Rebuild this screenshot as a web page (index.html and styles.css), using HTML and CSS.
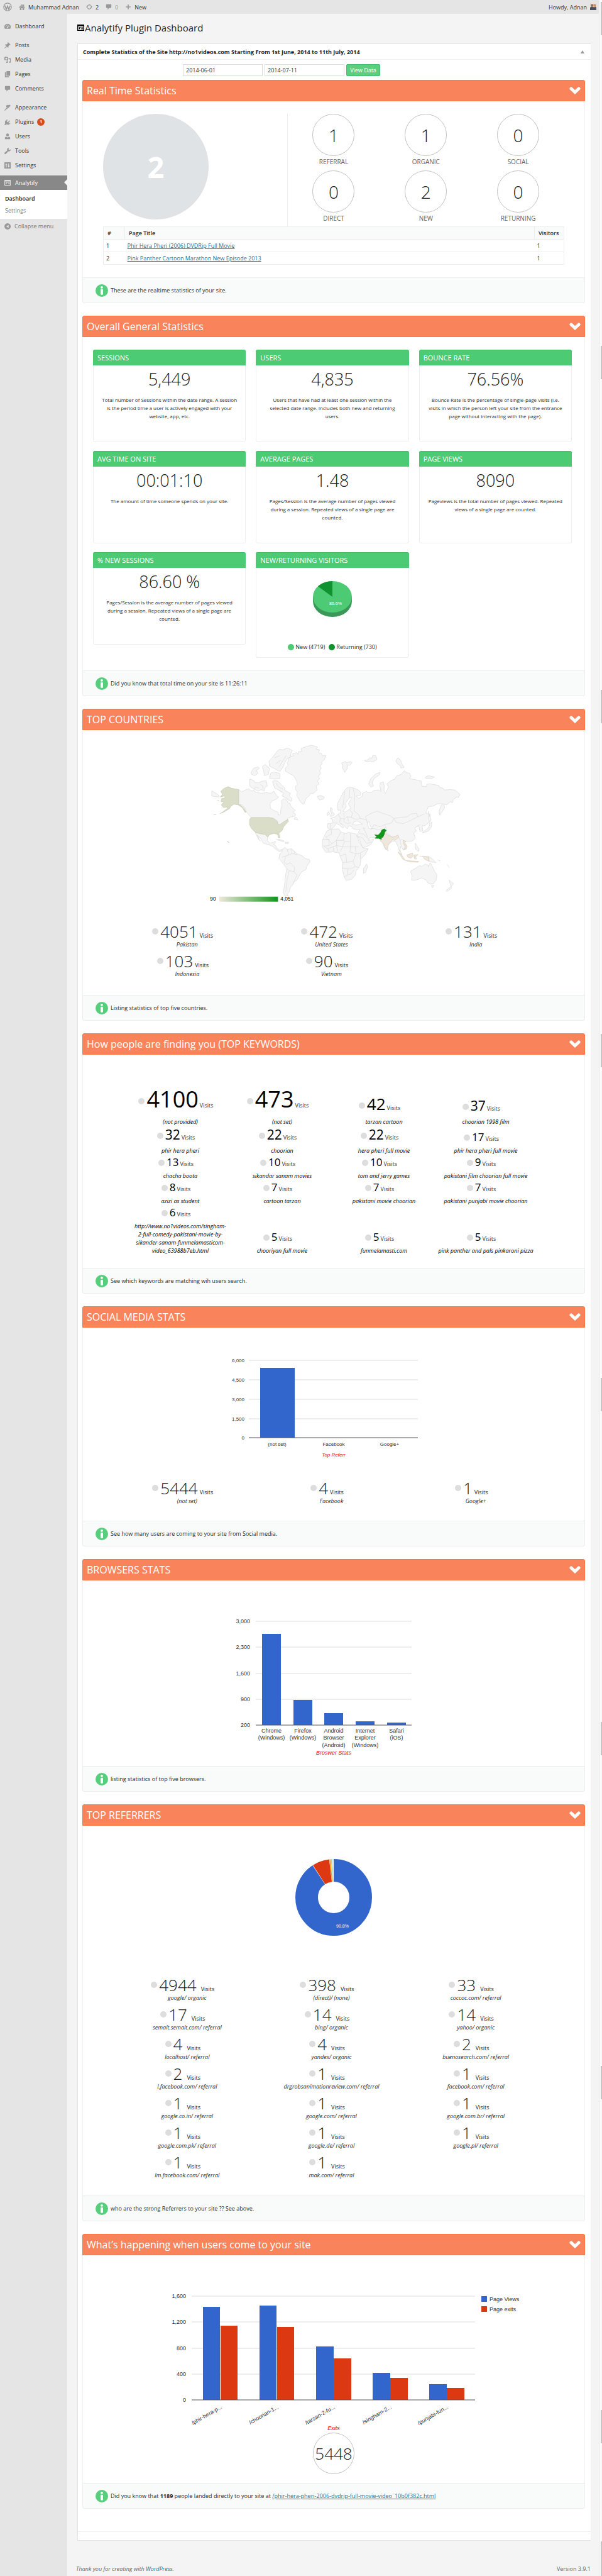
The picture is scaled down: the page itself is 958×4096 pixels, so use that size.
FILE: index.html
```html
<!DOCTYPE html>
<html lang="en">
<head>
<meta charset="utf-8">
<title>Analytify Plugin Dashboard</title>
<link rel="stylesheet" href="styles.css">
</head>
<body>
<svg class="sprite" aria-hidden="true">
  <symbol id="chevron" viewBox="0 0 18 12"><path d="M3 3 9 8.500 15 3" fill="none" stroke="#fff" stroke-width="5" stroke-linecap="round"/></symbol>
  <symbol id="info" viewBox="0 0 20 20"><circle cx="10" cy="10" r="10" fill="#57ce7c"/><circle cx="10" cy="4.800" r="1.900" fill="#fff"/><rect x="8.200" y="7.700" width="3.800" height="9" rx="1.300" fill="#fff"/></symbol>
  <symbol id="report" viewBox="0 0 12 12"><path fill-rule="evenodd" d="M0 0h12v11H0zM1.500 3v6.500h9V3zM3 4.500h3V6H4.500v2H3zM7 4.500h1v4H7zM9 4.500h1v4H9z"/></symbol>
</svg>
<div class="window">
  <header class="adminbar">
    <a href="#" class="bar-item" aria-label="About WordPress"><svg class="ico logo" viewBox="0 0 14 14"><circle cx="7" cy="7" r="6.200" fill="none" stroke="#999" stroke-width="1.200"/><path d="M2.500 4.500 5 11 7 5.800 9 11 11.200 5" fill="none" stroke="#999" stroke-width="1.700"/></svg></a>
    <a href="#" class="bar-item"><svg class="ico" viewBox="0 0 12 12"><path d="M0 7 6 1l2 2V1.500h2V5l2 2-1 .7L6 3 1 7.700zM2 7.500 6 4l4 3.500V12H7V8.500H5V12H2z"/></svg>Muhammad Adnan</a>
    <a href="#" class="bar-item"><svg class="ico" viewBox="0 0 12 12"><path d="M2 6a4 4 0 0 1 7-2.500M10 6a4 4 0 0 1-7 2.500" fill="none" stroke="#999" stroke-width="1.500"/><path d="M0 5.500h4L2 8.500zM8 6.500h4L10 3.500z"/></svg>2</a>
    <a href="#" class="bar-item muted"><svg class="ico" viewBox="0 0 12 12"><path d="M2 1h8a1 1 0 0 1 1 1v5a1 1 0 0 1-1 1H7l-3 3.500V8H2a1 1 0 0 1-1-1V2a1 1 0 0 1 1-1z"/></svg>0</a>
    <a href="#" class="bar-item"><svg class="ico" viewBox="0 0 12 12"><path d="M5 1.500h2V5h3.500v2H7v3.500H5V7H1.500V5H5z"/></svg>New</a>
    <a href="#" class="bar-item account">Howdy, Adnan<svg class="ico" viewBox="0 0 11 11"><rect width="11" height="11" fill="#d9cfc6"/><path d="M0 11V6.500L3 5l4 1 3-1 1 2v4z" fill="#4a4f5e"/><rect x="2" y="1" width="3" height="4" fill="#8a5a3c"/><rect x="6" y="1" width="4" height="4" fill="#d98a52"/></svg></a>
  </header>
  <div class="shell">
    <nav class="sidebar" aria-label="Admin menu">
      <ul class="menu">
        <li><a href="#"><svg class="ico" viewBox="0 0 12 12"><path fill-rule="evenodd" d="M6 1a6 6 0 0 0-5 9.500h10A6 6 0 0 0 6 1zM5.500 2.500h1v1.500h-1zM2 6h1.500v1H2zm6.500 0H10v1H8.500zM3 3.500l1-.5.700 1-1 .7zM9 3 7 8a1.200 1.200 0 1 1-2-.5z"/></svg>Dashboard</a></li>
        <li class="gap"><a href="#"><svg class="ico" viewBox="0 0 12 12"><path d="M7 0l5 5-1 .8-1.500-.3L7.500 8l.3 2-1 .8L4.500 8.500.5 12 0 11.500 3.500 7.500 1.200 5.200 2 4.200l2 .3L6.500 2.500 6.200 1z"/></svg>Posts</a></li>
        <li><a href="#"><svg class="ico" viewBox="0 0 12 12"><path fill-rule="evenodd" d="M0 1h1.500l.5-1h2l.5 1H7v5.500H0zM3.500 2a1.800 1.800 0 1 0 .1 0zM8 3h4v7.500a1.500 1.500 0 1 1-1.200-1.500V5H8zM4 7.500h2.500V11A1.500 1.500 0 1 1 5.300 9.500z"/></svg>Media</a></li>
        <li><a href="#"><svg class="ico" viewBox="0 0 12 12"><path d="M4 0h7v9H4zM1 2h2v8h6v2H1z"/></svg>Pages</a></li>
        <li><a href="#"><svg class="ico" viewBox="0 0 12 12"><path d="M2 1h8a1 1 0 0 1 1 1v5a1 1 0 0 1-1 1H7l-3 3.500V8H2a1 1 0 0 1-1-1V2a1 1 0 0 1 1-1z"/></svg>Comments</a></li>
        <li class="gap"><a href="#"><svg class="ico" viewBox="0 0 12 12"><path d="M5 1l2 .5L9.500.5 12 2 9 5.500 7 7.500 4.500 5.500 3 3.500zM4 6l2.500 2L4 9l-3 3-1-1 2.500-2.500z"/></svg>Appearance</a></li>
        <li><a href="#"><svg class="ico" viewBox="0 0 12 12"><path d="M2 3l1 1 2-3 1 .7L4.500 5 6 6.500 10 3l1 1-3.500 4L9 9l2-1 .5 1L8 11l-4-.5L1 12 0 11l1.500-2.500L1 5z"/></svg>Plugins<span class="badge">1</span></a></li>
        <li><a href="#"><svg class="ico" viewBox="0 0 12 12"><circle cx="6" cy="3" r="2.700"/><path d="M1 11V8l2-1.800 3 1.800 3-1.800L11 8v3z"/></svg>Users</a></li>
        <li><a href="#"><svg class="ico" viewBox="0 0 12 12"><path d="M9 0 7.500 2.500l2 2L12 3c.3 3-2 4.500-4.500 3.700L3 11.500a1.500 1.500 0 0 1-2.500-2.200L5.300 5C4.500 2 6 0 9 0z"/></svg>Tools</a></li>
        <li><a href="#"><svg class="ico" viewBox="0 0 12 12"><path fill-rule="evenodd" d="M0 0h12v12H0zM3 2v2H2v1.500h1V10h1.200V5.500h1V4h-1V2zM7.500 2v4.500h-1V8h1v2h1.200V8h1.300V6.500H8.700V2z"/></svg>Settings</a></li>
        <li class="gap-s current"><a href="#" aria-current="page"><svg class="ico"><use href="#report"/></svg>Analytify</a>
          <ul class="submenu">
            <li><a href="#" class="active">Dashboard</a></li>
            <li><a href="#">Settings</a></li>
          </ul>
        </li>
      </ul>
      <button type="button" class="collapse"><svg class="ico" viewBox="0 0 12 12"><path fill-rule="evenodd" d="M6 0a6 6 0 1 0 .1 0zM8 3v6L3.500 6z"/></svg>Collapse menu</button>
    </nav>
    <div class="content">
      <h1 class="page-title"><svg class="title-ico"><use href="#report"/></svg>Analytify Plugin Dashboard</h1>
      <main class="postbox">
        <div class="postbox-head">
          <h2>Complete Statistics of the Site http://no1videos.com Starting From 1st June, 2014 to 11th July, 2014</h2>
          <button type="button" class="toggle" aria-label="Toggle panel"><svg viewBox="0 0 6 5" width="6" height="5"><path d="M0 5 3 0l3 5z" fill="#999"/></svg></button>
        </div>
        <div class="postbox-body">
          <form class="dates">
            <input type="text" value="2014-06-01" aria-label="Start date">
            <input type="text" value="2014-07-11" aria-label="End date">
            <button type="button">View Data</button>
          </form>

          <section class="panel">
            <div class="panel-head"><h3>Real Time Statistics</h3><button type="button" aria-label="Collapse"><svg><use href="#chevron"/></svg></button></div>
            <div class="panel-body realtime">
              <div class="rt-top">
                <div class="rt-total"><span class="big-circle">2</span></div>
                <div class="rt-grid">
                  <div><span class="ring">1</span>REFERRAL</div>
                  <div><span class="ring">1</span>ORGANIC</div>
                  <div><span class="ring">0</span>SOCIAL</div>
                  <div><span class="ring">0</span>DIRECT</div>
                  <div><span class="ring">2</span>NEW</div>
                  <div><span class="ring">0</span>RETURNING</div>
                </div>
              </div>
              <table class="pages">
                <thead><tr><th class="num">#</th><th>Page Title</th><th class="vis">Visitors</th></tr></thead>
                <tbody>
                  <tr><td>1</td><td><a href="#">Phir Hera Pheri (2006) DVDRip Full Movie</a></td><td>1</td></tr>
                  <tr><td>2</td><td><a href="#">Pink Panther Cartoon Marathon New Episode 2013</a></td><td>1</td></tr>
                </tbody>
              </table>
            </div>
            <div class="panel-foot"><svg><use href="#info"/></svg><p>These are the realtime statistics of your site.</p></div>
          </section>

          <section class="panel">
            <div class="panel-head"><h3>Overall General Statistics</h3><button type="button" aria-label="Collapse"><svg><use href="#chevron"/></svg></button></div>
            <div class="panel-body cards">
              <article class="card"><h4>SESSIONS</h4><strong>5,449</strong><p>Total number of Sessions within the date range. A session is the period time a user is actively engaged with your website, app, etc.</p></article>
              <article class="card"><h4>USERS</h4><strong>4,835</strong><p>Users that have had at least one session within the selected date range. Includes both new and returning users.</p></article>
              <article class="card"><h4>BOUNCE RATE</h4><strong>76.56%</strong><p>Bounce Rate is the percentage of single-page visits (i.e. visits in which the person left your site from the entrance page without interacting with the page).</p></article>
              <article class="card"><h4>AVG TIME ON SITE</h4><strong>00:01:10</strong><p>The amount of time someone spends on your site.</p></article>
              <article class="card"><h4>AVERAGE PAGES</h4><strong>1.48</strong><p>Pages/Session is the average number of pages viewed during a session. Repeated views of a single page are counted.</p></article>
              <article class="card"><h4>PAGE VIEWS</h4><strong>8090</strong><p>Pageviews is the total number of pages viewed. Repeated views of a single page are counted.</p></article>
              <article class="card"><h4>% NEW SESSIONS</h4><strong>86.60 %</strong><p>Pages/Session is the average number of pages viewed during a session. Repeated views of a single page are counted.</p></article>
              <article class="card"><h4>NEW/RETURNING VISITORS</h4>
                <svg class="pie" viewBox="0 0 64 58" role="img" aria-label="New 86.6%">
                  <path d="M1 25v7a31 25 0 0 0 62 0v-7z" fill="#3b9858"/>
                  <ellipse cx="32" cy="25" rx="31" ry="25" fill="#4dca74"/>
                  <path d="M32 25V0A31 25 0 0 0 9 8.300z" fill="#109231"/>
                  <text x="37" y="38" class="tiny">86.6%</text>
                </svg>
                <ul class="legend"><li><i class="new"></i>New (4719)</li><li><i class="ret"></i>Returning (730)</li></ul>
              </article>
            </div>
            <div class="panel-foot"><svg><use href="#info"/></svg><p>Did you know that total time on your site is 11:26:11</p></div>
          </section>

          <section class="panel">
            <div class="panel-head"><h3>TOP COUNTRIES</h3><button type="button" aria-label="Collapse"><svg><use href="#chevron"/></svg></button></div>
            <div class="panel-body countries">
              <svg class="map" viewBox="-15 0 1245 789" role="img" aria-label="Visits by country">
                <defs><linearGradient id="scale"><stop offset="0" stop-color="#efe6dc"/><stop offset="1" stop-color="#109618"/></linearGradient></defs>
                <g class="land">
                  <path d="M153 232 168 243 180 236 200 228 212 238 226 236 235 244 262 250 285 246 305 250 322 240 328 252 335 262 345 268 330 280 315 284 303 300 305 322 322 332 342 340 345 355 352 350 355 325 360 308 358 285 372 275 385 285 392 300 398 296 402 310 410 318 424 332 412 340 425 350 422 360 405 362 385 372 390 376 375 382 360 395 345 402 338 395 342 385 330 375 318 368 300 366 212 366 200 350 190 340 185 322 170 305 153 303ZM424 364l8 4 4 10-18-4z"/>
                  <path d="M232 438 262 444 280 446 292 460 290 475 300 488 318 485 328 478 330 485 320 495 330 500 335 512 348 522 362 518 358 526 345 527 330 518 318 505 295 495 270 488 258 465 245 455 242 450 255 478 248 470ZM333 472l17-2 20 8-2 4-18-6zM375 484l17 0-2 6-14 0z"/>
                  <path d="M362 518 375 508 385 518 405 515 418 525 430 538 460 550 470 562 490 566 495 575 478 600 475 615 455 625 445 640 432 665 420 672 412 685 400 700 395 720 385 732 390 740 375 742 366 725 372 690 376 650 383 610 365 585 345 560 350 540 360 530Z"/>
                  <path d="M395 75 418 70 410 62 430 55 436 64 440 50 455 50 452 35 468 30 480 25 500 20 530 28 522 38 540 42 535 55 550 60 552 70 570 70 562 90 550 100 552 110 542 118 548 130 540 142 545 155 534 168 540 180 530 192 538 204 524 214 528 235 510 250 495 252 490 262 475 275 465 302 455 298 446 288 440 275 430 260 434 245 425 230 425 215 434 208 430 190 415 165 395 155 378 145 375 130 390 115 384 102 390 95Z"/>
                  <path d="M315 192 330 188 345 195 358 210 375 225 372 234 400 250 395 262 408 275 405 288 390 282 385 275 360 262 368 250 355 240 340 232 325 225 318 205ZM205 182l20 6 5 10 20 2 12-8 23-2 5 25-10 6-5 19-14-8-16 8-20-13-5 0-15-13z"/>
                  <path d="M325 65 340 45 350 40 365 42 385 33 410 45 402 60 402 75 385 84 375 100 365 125 350 145 335 138 320 130 300 120 298 95 312 82ZM320 148l30 7 0 25-25 2-25-4 5-23zM212 150l12-20 22-6 6 6-14 10 7 15-15 10-16-6zM266 122l14-10 20 18-5 30-20 5-2-20zM325 80 350 70M330 110 355 90M345 125 380 70"/>
                  <path d="M528 265 545 260 563 268 558 278 540 282ZM592 318l10 7-4 10 14 15-7 8-15 2 8-15-8-10zM575 345l10-7 3 12-12 6zM645 105l20-7 3 6 22-6 6 5-11 12-13 0 2 15-14 20-4-14-8-6 2-15zM755 92l15-2 10-10 10 2 5-14 14 2 6 18-10 6-10 6-12-4-23 2zM905 95l10-15 8 6 7 9 4 14 11 16-15 5-4-12-14-10zM785 220 775 205 785 180 808 158 830 150 825 162 800 180 792 200 798 215ZM1045 175l15-10 30 7-15 8-25-2z"/>
                  <path d="M628 330 625 300 640 270 660 235 672 224 685 220 705 225 722 232 738 245 735 260 715 262 728 275 745 262 745 250 765 240 770 246 790 245 800 236 822 234 835 240 828 215 830 200 845 195 850 215 848 235 855 250 870 220 862 205 880 190 900 182 910 165 930 160 945 142 955 150 972 155 976 170 970 180 1000 185 1025 190 1030 215 1050 218 1054 206 1070 205 1110 212 1115 222 1130 225 1136 234 1165 232 1190 235 1212 255 1205 270 1195 268 1180 280 1175 295 1165 290 1150 305 1135 302 1138 320 1115 355 1112 335 1120 310 1130 300 1105 300 1085 310 1060 315 1048 345 1070 350 1068 385 1045 405 1030 405 1035 430 1020 432 1015 405 995 415 1003 430 990 440 998 465 985 478 960 480 945 482 958 500 955 515 940 522 930 500 925 520 935 545 925 535 915 505 905 480 890 478 870 495 862 520 850 510 840 480 825 470 805 462 780 462 775 475 800 470 785 495 765 505 745 510 735 480 720 450 728 432 735 424 720 425 700 420 692 408 680 405 672 420 655 402 640 393 656 412 650 416 636 402 620 395 605 415 590 425 578 415 578 395 605 392 600 375 592 370 615 362 628 350 640 345 640 330Z"/>
                  <path d="M575 430 595 422 632 420 642 435 665 442 680 437 715 445 728 480 748 512 772 515 760 540 738 565 735 590 728 605 715 620 712 640 695 660 668 667 658 650 648 610 650 580 638 550 635 535 605 530 570 532 552 505 555 470 565 450ZM765 588l5 12-10 28-10 4 0-22z"/>
                  <path d="M975 622 1000 608 1020 595 1030 600 1045 588 1060 595 1060 602 1070 582 1080 600 1090 622 1102 640 1098 665 1085 682 1072 684 1060 680 1050 665 1030 655 1000 665 980 665 983 645ZM1075 690l13 2-8 10zM1160 665l22 17-12 13-5-10zM1145 715l25-20 2 7-22 18z"/>
                  <path d="M1060 430 1040 438 1032 438 1055 420 1066 405 1064 395 1078 388 1075 410 1062 430ZM1062 335l4 25 8 15-8 14-4-24zM998 488l8 10 2 8 8 8-2 14-12-8-4-10zM1063 552l22 16 12 14-32-6zM862 520l6-2 0 8zM24 238l30 18 6 12-36-5zM1105 568l14 6M1150 590l10 14"/>
                </g>
                <g class="sea">
                  <path d="M682 272 692 268 690 280 678 300 690 322 662 340 652 335 668 315 665 295ZM705 386l18-4 22 16-30 4-18-4zM768 390l10-5 4 20 8 15-14-2z"/>
                </g>
                <g class="borders">
                  <path d="M385 518 392 545 378 550 362 555M405 515 408 538 392 545M418 525 420 540 408 538M430 538 428 545 420 540M378 550 370 580 383 590 400 582 420 605 418 625 432 640 425 655 412 685M383 610 395 620 418 625M395 620 385 660 378 720"/>
                  <path d="M595 422 598 445 568 460M555 470 585 470 585 500 558 502M568 460 600 490 620 475 642 435M600 490 585 500M620 475 655 475 658 442M655 475 660 480 688 480 688 440M688 480 688 505 728 505M620 475 622 500 650 505 660 480M622 500 625 528M650 505 640 530M650 505 688 505 685 530 715 540 735 535 772 515M715 540 710 505M638 550 665 540 670 580 700 575 710 550 715 540M650 580 670 580M700 575 710 600 690 612 650 608M710 600 728 605M675 610 675 640 690 635 705 615M658 650 675 640M735 535 735 565M558 502 580 515 605 505 622 500M580 515 585 532M605 505 607 530"/>
                  <path d="M700 225 708 255 705 300M685 225 682 272M660 240 655 290 650 320M685 330 698 345 692 365 712 375 735 370 725 350 705 335 708 300M628 350 640 370 660 372 672 362 692 365M655 345 658 365M660 372 655 385 672 395 690 390M640 370 635 392M672 362 680 385M605 392 625 390M592 395 590 420M735 370 765 378 760 360 790 345 815 335 840 345 880 358 895 370 960 362 975 350 1005 345 1010 362 1040 350M895 370 905 388 940 395 975 380 1010 362M765 378 770 395M790 420 800 400 830 410 850 400 885 392 895 370M850 400 862 420 855 435 890 460 915 452M785 420 800 418 820 425 835 418M748 415 760 435 770 460M728 440 750 445 775 470M720 455 745 462 765 490 790 482M748 415 760 418M915 452 925 475 935 470 945 482M925 475 930 500M1005 408 1020 400"/>
                  <path d="M225 235 232 220 250 225M255 205 268 215 270 232M330 200 345 220 365 230M345 235 362 246"/>
                </g>
                <path class="us" d="M212 366 300 366 318 370 330 378 338 385 342 400 352 398 370 385 388 375 391 385 378 398 368 410 362 425 356 432 345 440 350 462 343 462 338 445 320 442 300 448 292 460 280 446 262 444 232 436 212 415 205 400 205 375ZM153 232 153 303 165 308 180 322 188 340 183 340 170 318 150 305 130 302 115 312 110 322 85 338 65 347 95 325 102 316 80 318 70 305 82 292 68 288 72 275 88 272 85 262 65 268 75 255 68 240 80 228 102 218 120 226ZM98 478l9 8-4-2zM50 282l10 4M32 353l14-1"/>
                <path class="asia" d="M838 465 852 435 865 450 890 460 915 450 920 460 900 475 890 472 870 492 865 515 857 520 848 495 840 485 830 478ZM940 475l12 3-4 12 12 15-5 10-13 5 8-15-10-17zM915 530l15 10 20 30 25 3 40 3-5 4-40-3-30-10zM958 545l27-10 3 15-10 10-16-5zM992 545l20-2-12 10 3 12-10-4zM1018 550l12 2M1032 550l31 3 0 22-18-8z"/>
                <path class="pk" d="M803 448 820 450 832 438 838 425 850 420 860 428 852 434 850 445 843 460 835 462 836 470 822 465 805 465 814 456Z"/>
                <rect x="60" y="744" width="281" height="24" fill="url(#scale)"/>
                <text class="scale-label" x="16" y="764">90</text>
                <text class="scale-label" x="353" y="764">4,051</text>
              </svg>
              <div class="stats">
                <div class="stat"><div class="count"><i></i><b>4051</b><span>Visits</span></div><em>Pakistan</em></div>
                <div class="stat"><div class="count"><i></i><b>472</b><span>Visits</span></div><em>United States</em></div>
                <div class="stat"><div class="count"><i></i><b>131</b><span>Visits</span></div><em>India</em></div>
                <div class="stat"><div class="count"><i></i><b>103</b><span>Visits</span></div><em>Indonesia</em></div>
                <div class="stat"><div class="count"><i></i><b>90</b><span>Visits</span></div><em>Vietnam</em></div>
              </div>
            </div>
            <div class="panel-foot"><svg><use href="#info"/></svg><p>Listing statistics of top five countries.</p></div>
          </section>

          <section class="panel">
            <div class="panel-head"><h3>How people are finding you (TOP KEYWORDS)</h3><button type="button" aria-label="Collapse"><svg><use href="#chevron"/></svg></button></div>
            <div class="panel-body keywords">
              <div class="word"><div class="k-xl"><i></i>4100<span>Visits</span></div><em>(not provided)</em></div>
              <div class="word"><div class="k-xl"><i></i>473<span>Visits</span></div><em>(not set)</em></div>
              <div class="word"><div class="k-l"><i></i>42<span>Visits</span></div><em>tarzan cartoon</em></div>
              <div class="word"><div class="k-m"><i></i>37<span>Visits</span></div><em>choorian 1998 film</em></div>
              <div class="word"><div class="k-m"><i></i>32<span>Visits</span></div><em>phir hera pheri</em></div>
              <div class="word"><div class="k-m"><i></i>22<span>Visits</span></div><em>choorian</em></div>
              <div class="word"><div class="k-m"><i></i>22<span>Visits</span></div><em>hera pheri full movie</em></div>
              <div class="word"><div class="k-s"><i></i>17<span>Visits</span></div><em>phir hera pheri full movie</em></div>
              <div class="word"><div class="k-s"><i></i>13<span>Visits</span></div><em>chacha boota</em></div>
              <div class="word"><div class="k-s"><i></i>10<span>Visits</span></div><em>sikandar sanam movies</em></div>
              <div class="word"><div class="k-s"><i></i>10<span>Visits</span></div><em>tom and jerry games</em></div>
              <div class="word"><div class="k-s"><i></i>9<span>Visits</span></div><em>pakistani film choorian full movie</em></div>
              <div class="word"><div class="k-s"><i></i>8<span>Visits</span></div><em>azizi as student</em></div>
              <div class="word"><div class="k-s"><i></i>7<span>Visits</span></div><em>cartoon tarzan</em></div>
              <div class="word"><div class="k-s"><i></i>7<span>Visits</span></div><em>pakistani movie choorian</em></div>
              <div class="word"><div class="k-s"><i></i>7<span>Visits</span></div><em>pakistani punjabi movie choorian</em></div>
              <div class="word"><div class="k-s"><i></i>6<span>Visits</span></div><em>http://www.no1videos.com/singham-<br>2-full-comedy-pakistani-movie-by-<br>sikander-sanam-funmelamasticom-<br>video_63988b7eb.html</em></div>
              <div class="word"><div class="k-s"><i></i>5<span>Visits</span></div><em>chooriyan full movie</em></div>
              <div class="word"><div class="k-s"><i></i>5<span>Visits</span></div><em>funmelamasti.com</em></div>
              <div class="word"><div class="k-s"><i></i>5<span>Visits</span></div><em>pink panther and pals pinkaroni pizza</em></div>
            </div>
            <div class="panel-foot"><svg><use href="#info"/></svg><p>See which keywords are matching wih users search.</p></div>
          </section>

          <section class="panel">
            <div class="panel-head"><h3>SOCIAL MEDIA STATS</h3><button type="button" aria-label="Collapse"><svg><use href="#chevron"/></svg></button></div>
            <div class="panel-body social">
              <svg class="chart c8" width="340" height="170" viewBox="-20 0 340 170" role="img" aria-label="Top social referrers">
                <path class="grid" d="M15 12h269M15 43h269M15 74h269M15 105h269"/>
                <rect class="blue" x="33" y="24" width="55" height="111"/>
                <path class="axis" d="M15 135h269"/>
                <g class="end"><text x="8" y="15">6,000</text><text x="8" y="46">4,500</text><text x="8" y="77">3,000</text><text x="8" y="108">1,500</text><text x="8" y="138">0</text></g>
                <g class="mid"><text x="60" y="148">(not set)</text><text x="150" y="148">Facebook</text><text x="239" y="148">Google+</text><text class="caption" x="150" y="165">Top Referr</text></g>
              </svg>
              <div class="stats">
                <div class="stat"><div class="count"><i></i><b>5444</b><span>Visits</span></div><em>(not set)</em></div>
                <div class="stat"><div class="count"><i></i><b>4</b><span>Visits</span></div><em>Facebook</em></div>
                <div class="stat"><div class="count"><i></i><b>1</b><span>Visits</span></div><em>Google+</em></div>
              </div>
            </div>
            <div class="panel-foot"><svg><use href="#info"/></svg><p>See how many users are coming to your site from Social media.</p></div>
          </section>

          <section class="panel">
            <div class="panel-head"><h3>BROWSERS STATS</h3><button type="button" aria-label="Collapse"><svg><use href="#chevron"/></svg></button></div>
            <div class="panel-body browsers">
              <svg class="chart c9" width="340" height="230" viewBox="-20 0 340 230" role="img" aria-label="Browser stats">
                <path class="grid" d="M26 15h248M26 56h248M26 98h248M26 139h248"/>
                <path class="blue" d="M36 35h30v145H36zM86 140h30v40H86zM135 161h30v19h-30zM185 174h30v6h-30zM235 176h30v4h-30z"/>
                <path class="axis" d="M26 180h248"/>
                <g class="end"><text x="17" y="18">3,000</text><text x="17" y="59">2,300</text><text x="17" y="101">1,600</text><text x="17" y="142">900</text><text x="17" y="183">200</text></g>
                <g class="mid">
                  <text x="51" y="192">Chrome</text><text x="51" y="203">(Windows)</text>
                  <text x="101" y="192">Firefox</text><text x="101" y="203">(Windows)</text>
                  <text x="150" y="192">Android</text><text x="150" y="203">Browser</text><text x="150" y="215">(Android)</text>
                  <text x="200" y="192">Internet</text><text x="200" y="203">Explorer</text><text x="200" y="215">(Windows)</text>
                  <text x="250" y="192">Safari</text><text x="250" y="203">(iOS)</text>
                  <text class="caption" x="150" y="227">Broswer Stats</text>
                </g>
              </svg>
            </div>
            <div class="panel-foot"><svg><use href="#info"/></svg><p>listing statistics of top five browsers.</p></div>
          </section>

          <section class="panel">
            <div class="panel-head"><h3>TOP REFERRERS</h3><button type="button" aria-label="Collapse"><svg><use href="#chevron"/></svg></button></div>
            <div class="panel-body referrers">
              <svg class="chart donut" width="140" height="140" viewBox="-70 -70 140 140" role="img" aria-label="Referrer share">
                <g fill="none" stroke-width="36" transform="rotate(-90)">
                  <circle r="43" stroke="#3366cc" pathLength="1000" stroke-dasharray="907 1000"/>
                  <circle r="43" stroke="#dc3912" pathLength="1000" stroke-dasharray="72 1000" stroke-dashoffset="-909"/>
                  <circle r="43" stroke="#ff9900" pathLength="1000" stroke-dasharray="5 1000" stroke-dashoffset="-982"/>
                  <circle r="43" stroke="#109618" stroke-opacity=".5" pathLength="1000" stroke-dasharray="2 1000" stroke-dashoffset="-989"/>
                  <circle r="43" stroke="#0099c6" stroke-opacity=".5" pathLength="1000" stroke-dasharray="2 1000" stroke-dashoffset="-993"/>
                </g>
                <text class="share" x="14" y="48">90.8%</text>
              </svg>
              <div class="stats wide">
                <div class="stat"><div class="count"><i></i><b>4944</b><span>Visits</span></div><em>google/ organic</em></div>
                <div class="stat"><div class="count"><i></i><b>398</b><span>Visits</span></div><em>(direct)/ (none)</em></div>
                <div class="stat"><div class="count"><i></i><b>33</b><span>Visits</span></div><em>coccoc.com/ referral</em></div>
                <div class="stat"><div class="count"><i></i><b>17</b><span>Visits</span></div><em>semalt.semalt.com/ referral</em></div>
                <div class="stat"><div class="count"><i></i><b>14</b><span>Visits</span></div><em>bing/ organic</em></div>
                <div class="stat"><div class="count"><i></i><b>14</b><span>Visits</span></div><em>yahoo/ organic</em></div>
                <div class="stat"><div class="count"><i></i><b>4</b><span>Visits</span></div><em>localhost/ referral</em></div>
                <div class="stat"><div class="count"><i></i><b>4</b><span>Visits</span></div><em>yandex/ organic</em></div>
                <div class="stat"><div class="count"><i></i><b>2</b><span>Visits</span></div><em>buenosearch.com/ referral</em></div>
                <div class="stat"><div class="count"><i></i><b>2</b><span>Visits</span></div><em>l.facebook.com/ referral</em></div>
                <div class="stat"><div class="count"><i></i><b>1</b><span>Visits</span></div><em>drgrobsanimationreview.com/ referral</em></div>
                <div class="stat"><div class="count"><i></i><b>1</b><span>Visits</span></div><em>facebook.com/ referral</em></div>
                <div class="stat"><div class="count"><i></i><b>1</b><span>Visits</span></div><em>google.co.in/ referral</em></div>
                <div class="stat"><div class="count"><i></i><b>1</b><span>Visits</span></div><em>google.com/ referral</em></div>
                <div class="stat"><div class="count"><i></i><b>1</b><span>Visits</span></div><em>google.com.br/ referral</em></div>
                <div class="stat"><div class="count"><i></i><b>1</b><span>Visits</span></div><em>google.com.pk/ referral</em></div>
                <div class="stat"><div class="count"><i></i><b>1</b><span>Visits</span></div><em>google.de/ referral</em></div>
                <div class="stat"><div class="count"><i></i><b>1</b><span>Visits</span></div><em>google.pl/ referral</em></div>
                <div class="stat"><div class="count"><i></i><b>1</b><span>Visits</span></div><em>lm.facebook.com/ referral</em></div>
                <div class="stat"><div class="count"><i></i><b>1</b><span>Visits</span></div><em>mak.com/ referral</em></div>
              </div>
            </div>
            <div class="panel-foot"><svg><use href="#info"/></svg><p>who are the strong Referrers to your site ?? See above.</p></div>
          </section>

          <section class="panel">
            <div class="panel-head"><h3>What’s happening when users come to your site</h3><button type="button" aria-label="Collapse"><svg><use href="#chevron"/></svg></button></div>
            <div class="panel-body exits">
              <svg class="chart c9" width="620" height="226" viewBox="0 0 620 226" role="img" aria-label="Page views and exits">
                <path class="grid" d="M84 10h451M84 51h451M84 93h451M84 134h451"/>
                <path class="blue" d="M102 27h27v148h-27zM192 25h27v150h-27zM282 90h28v85h-28zM372 132h28v43h-28zM462 150h28v25h-28z"/>
                <path class="red" d="M130 57h27v118h-27zM220 59h27v116h-27zM310 109h28v66h-28zM400 140h28v35h-28zM490 156h28v19h-28z"/>
                <path class="axis" d="M84 175h451"/>
                <g class="end"><text x="75" y="13">1,600</text><text x="75" y="54">1,200</text><text x="75" y="96">800</text><text x="75" y="137">400</text><text x="75" y="178">0</text>
                  <text transform="translate(133 188) rotate(-30)">/phir-hera-p...</text>
                  <text transform="translate(223 188) rotate(-30)">/choorian-1...</text>
                  <text transform="translate(313 188) rotate(-30)">/tarzan-2-fu...</text>
                  <text transform="translate(403 188) rotate(-30)">/singham-2...</text>
                  <text transform="translate(493 188) rotate(-30)">/punjabi-fun...</text>
                </g>
                <rect class="blue" x="545" y="10" width="9" height="9"/><text x="558" y="18">Page Views</text>
                <rect class="red" x="545" y="26" width="9" height="9"/><text x="558" y="34">Page exits</text>
                <g class="mid"><text class="caption" x="310" y="223">Exits</text></g>
              </svg>
              <span class="ring exit">5448</span>
            </div>
            <div class="panel-foot"><svg><use href="#info"/></svg><p>Did you know that <b>1189</b> people landed directly to your site at <a href="#">/phir-hera-pheri-2006-dvdrip-full-movie-video_10b0f382c.html</a></p></div>
          </section>
        </div>
        <div class="postbox-end"></div>
      </main>
      <footer class="footer"><em>Thank you for creating with <a href="#">WordPress</a>.</em><span>Version 3.9.1</span></footer>
    </div>
  </div>
</div>
<div class="scrolltrack"></div>
</body>
</html>
```
FILE: styles.css
```css
* { box-sizing: border-box; }
body, h1, h2, h3, h4, p, ul { margin: 0; padding: 0; }
ul { list-style: none; }
i, em { font-style: normal; }
body {
  display: flex;
  background: #f4f4f4;
  color: #2b2b2b;
  font: 9px/13px "Open Sans", sans-serif;
}
button, input { font: inherit; }
button { border: 0; padding: 0; background: none; cursor: pointer; }
.sprite { position: absolute; width: 0; height: 0; }

.window { flex: 1; min-width: 0; display: flex; flex-direction: column; min-height: 100vh; }
.scrolltrack {
  flex: none;
  width: 5px;
  border-left: 1px solid #e9e9e9;
  background:
    linear-gradient(#c4c4c4, #c4c4c4) right bottom / 2px 55px no-repeat,
    linear-gradient(#fafafa, #fafafa) right bottom / 2px 140px no-repeat,
    repeating-linear-gradient(#fafafa 0 3px, #c4c4c4 3px 56px, #fafafa 56px 547px) right top / 2px 100% no-repeat,
    #fafafa;
}

.ico { width: 10px; height: 10px; fill: #999; flex: none; }

.adminbar {
  display: flex;
  align-items: center;
  gap: 11px;
  height: 22px;
  padding: 0 4px 0 5px;
  background: #e5e5e5;
}
.bar-item { display: flex; align-items: center; gap: 5px; color: #333; text-decoration: none; }
.bar-item .logo { width: 14px; height: 14px; }
.bar-item.muted { color: #999; }
.account { margin-left: auto; }

.shell { flex: 1; display: flex; }
.sidebar { width: 107px; flex: none; padding-top: 8px; background: #e5e5e5; }
.menu > li > a { display: flex; align-items: center; gap: 7px; height: 23px; padding-left: 7px; color: #333; text-decoration: none; }
.menu .gap { margin-top: 7px; }
.menu .gap-s { margin-top: 5px; }
.badge { width: 12px; height: 12px; margin-left: -2px; border-radius: 50%; background: #d54e21; color: #fff; font-size: 7px; font-weight: 700; line-height: 12px; text-align: center; }
.menu .current > a { position: relative; background: #888; color: #fff; }
.menu .current .ico { fill: #ddd; }
.menu .current > a::after { content: ""; position: absolute; right: 0; top: 6px; border: 5px solid transparent; border-right-color: #f4f4f4; border-left: 0; }
.submenu { padding: 4px 8px; background: #fff; }
.submenu a { display: block; line-height: 19px; color: #777; text-decoration: none; }
.submenu .active { color: #222; font-weight: 600; }
.collapse { display: flex; align-items: center; gap: 6px; height: 23px; padding-left: 7px; color: #777; }

.content { flex: 1; min-width: 0; display: flex; flex-direction: column; padding: 10px 13px 0 16px; }
.page-title { display: flex; align-items: center; gap: 1px; color: #222; font-size: 15px; font-weight: 400; line-height: 24px; }
.title-ico { width: 11px; height: 11px; }

.postbox { margin-top: 13px; border: 1px solid #e5e5e5; border-right: 0; background: #fff; }
.postbox-head { display: flex; align-items: center; justify-content: space-between; height: 25px; padding: 0 10px 0 8px; border-bottom: 1px solid #eee; }
.postbox-head h2 { color: #222; font-size: 9px; font-weight: 700; }
.toggle { display: flex; }
.postbox-body { display: flex; flex-direction: column; gap: 20px; padding: 7px 9px 36px 7px; border-bottom: 1px solid #eee; }
.postbox-end { height: 13px; }

.dates { display: flex; gap: 3px; margin-bottom: -14px; padding-left: 20%; }
.dates input { width: 127px; height: 19px; padding: 0 4px; border: 1px solid #ddd; background: #fff; color: #333; }
.dates button { width: 54px; height: 19px; border: 1px solid #3fbf6a; border-radius: 2px; background: #5acf80; color: #fff; }

.panel-head { display: flex; align-items: center; justify-content: space-between; height: 34px; padding: 0 6px; border: 1px solid #ff7443; border-radius: 3px 3px 0 0; background: #f9845b; }
.panel-head h3 { color: #fff; font-size: 16px; font-weight: 400; line-height: 22px; }
.panel-head button { display: flex; }
.panel-head svg { width: 18px; height: 12px; }
.panel-body { border: 1px solid #eff1f1; border-width: 0 1px; }
.panel-foot { display: flex; align-items: center; gap: 4px; height: 41px; padding-left: 20px; border: 1px solid #ebeeee; border-radius: 0 0 3px 3px; background: #f9fafa; }
.panel-foot svg { width: 20px; height: 20px; flex: none; }
.panel-foot a, .pages a, .footer a { color: #21759b; }

.realtime { padding: 20px 32px; }
.rt-top { display: grid; grid-template-columns: 2fr 3fr; height: 168px; }
.rt-total { border-right: 1px solid #eee; }
.big-circle { display: flex; align-items: center; justify-content: center; width: 168px; height: 168px; border-radius: 50%; background: #e0e3e6; color: #fff; font-size: 47px; font-weight: 700; line-height: 64px; }
.rt-grid { display: grid; grid-template-columns: repeat(3, 1fr); color: #6b6060; font-size: 10px; line-height: 14px; text-align: center; }
.rt-grid > div { display: flex; flex-direction: column; align-items: center; gap: 2px; height: 90px; }
.ring { display: flex; align-items: center; justify-content: center; width: 67px; height: 67px; border: 1px solid #c2c2c2; border-radius: 50%; color: #222; font-size: 28px; font-weight: 300; }
.pages { width: 100%; margin-top: 11px; border-collapse: collapse; }
.pages th, .pages td { height: 20px; padding: 0 4px; text-align: left; border: 1px solid #eceeee; border-width: 1px 0; }
.pages th { padding: 0 6px; background: #f9fafa; font-weight: 600; border-width: 1px; }
.pages tr { border: 1px solid #eceeee; }
.pages .num { width: 34px; }
.pages .vis { width: 47px; }

.cards { display: grid; grid-template-columns: repeat(3, 1fr); align-items: start; gap: 14px 16px; padding: 20px 20px 20px 16px; }
.card { display: flex; flex-direction: column; align-items: center; min-height: 147px; border: 1px solid #eee; border-radius: 3px; text-align: center; }
.card h4 { align-self: stretch; height: 25px; margin: -1px -1px 0; padding-left: 7px; border-top: 1px solid #3fc064; border-radius: 3px 3px 0 0; background: #4dca74; color: #fff; font-size: 11px; font-weight: 400; line-height: 23px; text-align: left; }
.card strong { margin: 4px 0; color: #222; font-size: 27px; font-weight: 300; line-height: 36px; }
.card p { padding: 4px 11px; font-size: 8px; }
.pie { width: 64px; height: 58px; margin-top: 21px; }
.tiny { fill: #fff; font: 7px "Liberation Sans", sans-serif; text-anchor: middle; }
.legend { display: flex; gap: 6px; margin: 40px 0 10px; }
.legend li { display: flex; align-items: center; gap: 2px; }
.legend i { width: 10px; height: 10px; border-radius: 50%; }
.new { background: #4dca74; }
.ret { background: #109231; }

.map { display: block; width: 414px; height: 263px; margin: 0 auto 26px; }
.countries { padding: 17px 0 21px; }
.land path { fill: #f5f5f5; stroke: #d8d8d8; stroke-width: 2; }
.sea path { fill: #fff; stroke: #d8d8d8; stroke-width: 2; }
.borders path { fill: none; stroke: #dadada; stroke-width: 2; }
.us { fill: #dadec9; stroke: #c3c8ae; stroke-width: 2; }
.asia { fill: #efe6dc; stroke: #d8cbbb; stroke-width: 2; }
.pk { fill: #109618; stroke: #0c7a13; stroke-width: 2; }
.scale-label { font: 25px "Liberation Sans", sans-serif; fill: #000; }

.stats { display: grid; grid-template-columns: repeat(3, 1fr); margin: 0 58px 0 51px; }
.stat { height: 47px; text-align: center; }
.count { display: flex; justify-content: center; align-items: baseline; gap: 3px; padding-right: 14px; color: #222; }
.count i, .word i { width: 10px; height: 10px; border-radius: 50%; background: #ddd; }
.count i { align-self: center; }
.count b { font-size: 26px; font-weight: 300; line-height: 28px; }
.wide .count span { margin-left: 4px; }
.stat em, .word em { display: block; font-style: italic; }

.keywords { display: grid; grid-template-columns: repeat(4, 1fr); align-items: end; padding: 46px 76px 21px 74px; color: #000; text-align: center; }
.word em { padding: 4px 4px 0; }
.word div { padding-right: 14px; }
.word i { display: inline-block; margin-right: 3px; vertical-align: middle; }
.word span { margin-left: 2px; font-size: 9px; line-height: 9px; color: #333; }
.k-xl { font-size: 36px; line-height: 50px; }
.k-l { font-size: 26px; line-height: 36px; }
.k-m { font-size: 21px; line-height: 29px; }
.k-s { font-size: 17px; line-height: 23px; }

.chart { display: block; margin: 0 auto; fill: #333; font-family: "Liberation Sans", sans-serif; }
.c8 { font-size: 8px; }
.c9 { font-size: 9px; }
.end { text-anchor: end; }
.mid { text-anchor: middle; }
.grid, .axis { fill: none; stroke: #ddd; }
.axis { stroke: #555; }
.blue { fill: #3366cc; }
.red { fill: #dc3912; }
.caption { fill: #f00; font-style: italic; }
.share { fill: #fff; font-size: 7px; text-anchor: middle; }
.social { padding: 40px 0 19px; }
.social .stats { margin-top: 31px; }
.browsers { padding: 50px 0 15px; }
.referrers { padding: 44px 0 20px; }
.referrers .stats { margin-top: 55px; }
.exits { padding: 55px 0 14px; }
.exit { width: 66px; height: 66px; margin: 1px auto 0; font-size: 26px; }

.footer { display: flex; justify-content: space-between; align-items: center; margin-top: 38px; margin-left: -2px; color: #666; }
.footer em { font-style: italic; }
.footer a { text-decoration: none; }
```
